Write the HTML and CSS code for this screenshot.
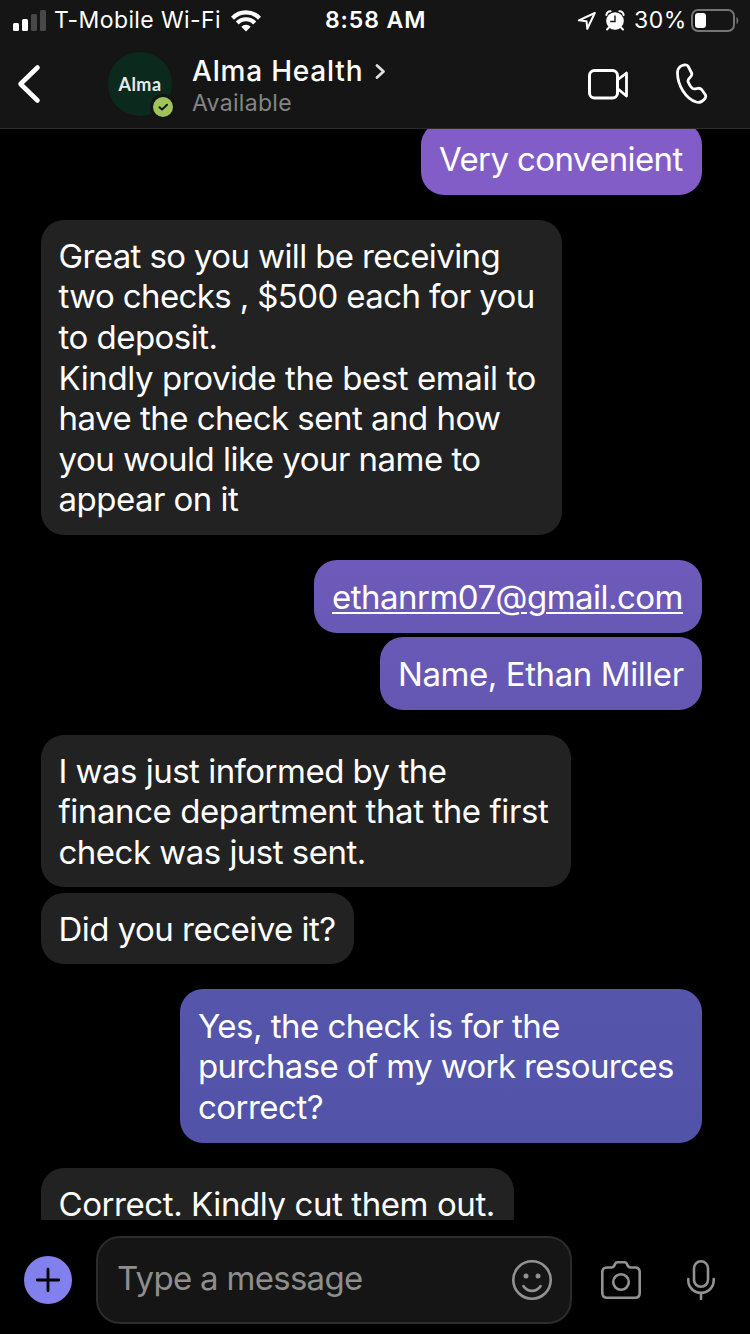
FILE: index.html
```html
<!DOCTYPE html>
<html lang="en">
<head>
    <meta charset="UTF-8">
    <meta name="viewport" content="width=device-width, initial-scale=1.0">
    <title>Alma Health</title>
    <link rel="stylesheet" href="styles.css">
</head>
<body>
    <div class="status-bar">
        <div class="status-left">
            <svg class="signal" width="34" height="22" viewBox="0 0 34 22">
                <rect x="0" y="13" width="6" height="8" rx="1.5" fill="#fff"/>
                <rect x="9" y="9" width="6" height="12" rx="1.5" fill="#fff"/>
                <rect x="18" y="4" width="6" height="17" rx="1.5" fill="#484848"/>
                <rect x="27" y="0" width="6" height="21" rx="1.5" fill="#484848"/>
            </svg>
            <span class="carrier">T-Mobile Wi-Fi</span>
            <svg class="wifi" width="30" height="22" viewBox="0 0 30 22">
                <path d="M1.5 8.2a18.6 18.6 0 0 1 27 0M6.3 13a12 12 0 0 1 17.4 0" fill="none" stroke="#fff" stroke-width="4.2"/>
                <path d="M15 21.5l-4.7-4.7a6.6 6.6 0 0 1 9.4 0z" fill="#fff"/>
            </svg>
        </div>
        <span class="clock">8:58 AM</span>
        <div class="status-right">
            <svg width="20" height="20" viewBox="0 0 20 20">
                <path d="M17.8 2L1.8 9.3l7.7.9.8 7.6z" fill="none" stroke="#fff" stroke-width="2" stroke-linejoin="round"/>
            </svg>
            <svg class="alarm" width="20" height="21" viewBox="0 0 20 21">
                <circle cx="10" cy="11" r="8.8" fill="#fff"/>
                <path d="M1.4 5A4 4 0 0 1 5.6 1.2M18.6 5A4 4 0 0 0 14.4 1.2M4 17.5l-2 2M16 17.5l2 2" fill="none" stroke="#fff" stroke-width="2" stroke-linecap="round"/>
                <path d="M10 5.5v6H5.2" fill="none" stroke="#151515" stroke-width="1.4"/>
            </svg>
            <span class="percent">30%</span>
            <svg class="battery" width="49" height="24" viewBox="0 0 49 24">
                <rect x="1" y="1" width="42" height="21" rx="6" fill="none" stroke="#747474" stroke-width="2"/>
                <rect x="4" y="4" width="11" height="15" rx="3" fill="#fff"/>
                <path d="M45.5 8c2.4 1 2.4 6 0 7z" fill="#747474"/>
            </svg>
        </div>
    </div>

    <header class="chat-header">
        <svg class="back" width="24" height="40" viewBox="0 0 24 40">
            <path d="M20.5 3.5L3.5 20l17 16.5" fill="none" stroke="#fff" stroke-width="4.6" stroke-linecap="round" stroke-linejoin="round"/>
        </svg>
        <div class="avatar">
            <span>Alma</span>
            <svg class="presence" width="26" height="26" viewBox="0 0 26 26">
                <circle cx="13" cy="13" r="13" fill="#151515"/>
                <circle cx="13" cy="13" r="10" fill="#a0c45c"/>
                <path d="M9.5 13.2l2.5 2.4 5-4.8" fill="none" stroke="#151515" stroke-width="2" stroke-linecap="round" stroke-linejoin="round"/>
            </svg>
        </div>
        <div class="contact">
            <div class="name">Alma Health
                <svg width="12" height="18" viewBox="0 0 12 18">
                    <path d="M3 3.5l6.5 6-6.5 6" fill="none" stroke="#e0e0e0" stroke-width="2.8" stroke-linecap="round" stroke-linejoin="round"/>
                </svg>
            </div>
            <div class="availability">Available</div>
        </div>
        <svg class="video" width="42" height="32" viewBox="0 0 42 32">
            <rect x="1.5" y="1.5" width="28" height="27.5" rx="5" fill="none" stroke="#fff" stroke-width="3"/>
            <path d="M30 10.500l8.500-6.500v23L30 20" fill="none" stroke="#fff" stroke-width="2.8" stroke-linejoin="round"/>
        </svg>
        <svg class="phone" width="32" height="42" viewBox="0 0 32 42">
            <path d="M4.300 3.500C6.500 1.800 10.500 1 12 3l3.600 7c.8 2-.2 3.200-1.600 4.500-1.800 1.700-2.600 2.600-1.800 4.500 1 2.600 2.300 4.700 4 6.200 1.500 1.300 2.800.8 4.900.3 2-.5 3.300-.4 4.500 1l3.600 5c1 1.600.5 3.300-.8 4.700-2 2.200-4.700 4-8.200 2.800C9.500 35.500 1.500 22 1.500 10c0-2.800.8-5 2.800-6.500z" fill="none" stroke="#fff" stroke-width="2.8" stroke-linejoin="round"/>
        </svg>
    </header>

    <main class="messages">
        <div class="bubble sent very tight">Very convenient</div>
        <div class="bubble received great first"><span class="tight">Great so you will be receiving<br>two checks , $500 each for you</span><br>to deposit.<br><span class="loose">Kindly provide the best email to</span><br>have the check sent and how<br>you would like your name to<br>appear on it</div>
        <div class="bubble sent email first"><span class="link">ethanrm07@gmail.com</span></div>
        <div class="bubble sent fullname loose">Name, Ethan Miller</div>
        <div class="bubble received informed first">I was just informed by the<br><span class="loose">finance department that the first</span><br>check was just sent.</div>
        <div class="bubble received receive">Did you receive it?</div>
        <div class="bubble sent resources first">Yes, the check is for the<br><span class="tight">purchase of my work resources</span><br>correct?</div>
        <div class="bubble received cut first loose">Correct. Kindly cut them out.</div>
    </main>

    <footer class="composer">
        <svg class="add" width="48" height="48" viewBox="0 0 48 48">
            <circle cx="24" cy="24" r="24" fill="#8280ec"/>
            <path d="M24 13.2v21.6M13.2 24h21.6" stroke="#000" stroke-width="2.8" stroke-linecap="round"/>
        </svg>
        <div class="field">
            <span class="placeholder">Type a message</span>
            <svg width="40" height="40" viewBox="0 0 40 40">
                <circle cx="20" cy="20" r="18.7" fill="none" stroke="#929292" stroke-width="2.6"/>
                <circle cx="14" cy="16" r="2.5" fill="#929292"/>
                <circle cx="26" cy="16" r="2.5" fill="#929292"/>
                <path d="M11.5 26.2c4.500 6.200 12.500 6.200 17 0" fill="none" stroke="#929292" stroke-width="2.7" stroke-linecap="round"/>
            </svg>
        </div>
        <svg class="camera" width="40" height="38" viewBox="0 0 40 38">
            <path d="M6 6.500h4.500c1.500 0 2.200-.6 2.800-1.900l.8-1.700c.5-1.100 1.200-1.600 2.400-1.600h7c1.200 0 1.900.5 2.400 1.600l.8 1.700c.6 1.300 1.300 1.900 2.800 1.900H34c3 0 4.700 1.700 4.700 4.700v20.800c0 3-1.700 4.700-4.700 4.700H6c-3 0-4.700-1.700-4.700-4.700V11.200c0-3 1.700-4.700 4.700-4.700z" fill="none" stroke="#929292" stroke-width="2.6"/>
            <circle cx="20" cy="21" r="7.8" fill="none" stroke="#929292" stroke-width="2.6"/>
        </svg>
        <svg class="mic" width="30" height="40" viewBox="0 0 30 40">
            <rect x="8" y="1.3" width="14" height="25.5" rx="7" fill="none" stroke="#929292" stroke-width="2.6"/>
            <path d="M2.300 19v1.500a12.700 12.300 0 0 0 25.400 0V19M15 33v6" fill="none" stroke="#929292" stroke-width="2.6" stroke-linecap="round"/>
        </svg>
    </footer>
</body>
</html>
```
FILE: styles.css
```css
* {
    box-sizing: border-box;
}
body {
    margin: 0;
    width: 750px;
    height: 1334px;
    display: flex;
    flex-direction: column;
    overflow: hidden;
    background: #000;
    color: #fff;
    font-family: Inter, "Liberation Sans", sans-serif;
}
svg {
    display: block;
    flex-shrink: 0;
}
.status-bar {
    height: 40px;
    display: grid;
    grid-template-columns: 325px 101px 1fr;
    background: #151515;
    font-size: 23px;
    line-height: 41px;
    white-space: nowrap;
}
.status-left, .status-right {
    display: flex;
    align-items: center;
}
.status-left {
    padding-left: 13px;
}
.carrier {
    width: 184px;
    padding-left: 7px;
    letter-spacing: 0.4px;
}
.clock {
    font-weight: 600;
    letter-spacing: 0.9px;
}
.status-right {
    padding-left: 151px;
}
.alarm {
    margin-left: 8px;
}
.percent {
    width: 55px;
    margin-left: 9px;
    letter-spacing: 0.5px;
}
.battery {
    margin-left: 2px;
}
.chat-header {
    height: 89px;
    display: flex;
    align-items: flex-start;
    padding: 12px 0 0 17px;
    background: #151515;
    border-bottom: 1px solid #2b2b2b;
}
.back {
    margin-top: 12px;
}
.avatar {
    position: relative;
    width: 64px;
    height: 64px;
    margin-left: 67px;
    border-radius: 50%;
    background: #0c291d;
    font-family: Lato, Inter, sans-serif;
    font-size: 18px;
    font-weight: bold;
    line-height: 64px;
    letter-spacing: 0.5px;
    text-align: center;
    color: #e4ede8;
}
.presence {
    position: absolute;
    left: 42px;
    top: 42px;
}
.contact {
    width: 396px;
    margin-left: 20px;
}
.name {
    display: flex;
    align-items: center;
    gap: 11px;
    font-size: 28px;
    font-weight: 500;
    line-height: 38px;
    letter-spacing: 0.8px;
}
.availability {
    font-size: 23px;
    line-height: 26px;
    letter-spacing: 0.3px;
    color: #858585;
}
.video {
    margin-top: 17px;
}
.phone {
    margin: 11px 0 0 46px;
}
.messages {
    height: 1091px;
    display: flex;
    flex-direction: column;
    align-items: flex-start;
    padding: 0 48px 0 41px;
    overflow: hidden;
    font-size: 33px;
    line-height: 40.6px;
    letter-spacing: -0.52px;
}
.bubble {
    flex-shrink: 0;
    padding: 15.8px 0 0 17.5px;
    border-radius: 23px;
    white-space: nowrap;
}
.tight {
    letter-spacing: -0.62px;
}
.loose {
    letter-spacing: -0.42px;
}
.sent {
    align-self: flex-end;
    padding: 16.8px 0 0 18px;
}
.received {
    background: #222;
}
.first {
    margin-top: 25px;
}
.very {
    width: 281px;
    height: 73px;
    margin-top: -7px;
    background: #835dc7;
}
.great {
    width: 521px;
    height: 315px;
}
.email {
    width: 388px;
    height: 73px;
    background: linear-gradient(#6e5abb, #6859b5);
}
.link {
    text-decoration: underline;
    text-decoration-thickness: 2px;
    text-underline-offset: 3px;
}
.fullname {
    width: 322px;
    height: 73px;
    margin-top: 4px;
    background: linear-gradient(#6959b7, #6457b2);
}
.informed {
    width: 530px;
    height: 152px;
}
.receive {
    width: 313px;
    height: 71px;
    margin-top: 6px;
}
.resources {
    width: 522px;
    height: 154px;
    background: linear-gradient(#5555ac, #5153a8);
}
.cut {
    width: 473px;
    height: 71px;
}
.composer {
    height: 114px;
    display: flex;
    align-items: center;
    padding: 6px 0 0 24px;
}
.field {
    width: 476px;
    height: 88px;
    display: flex;
    align-items: center;
    justify-content: space-between;
    margin-left: 24px;
    padding: 0 18px 0 19px;
    border: 2px solid #2b2b2b;
    border-radius: 24px;
    background: #151515;
    color: #8e8e8e;
    font-size: 33px;
    letter-spacing: -0.7px;
}
.placeholder {
    padding-bottom: 4px;
}
.camera {
    margin-left: 29px;
}
.mic {
    margin-left: 45px;
}
```
